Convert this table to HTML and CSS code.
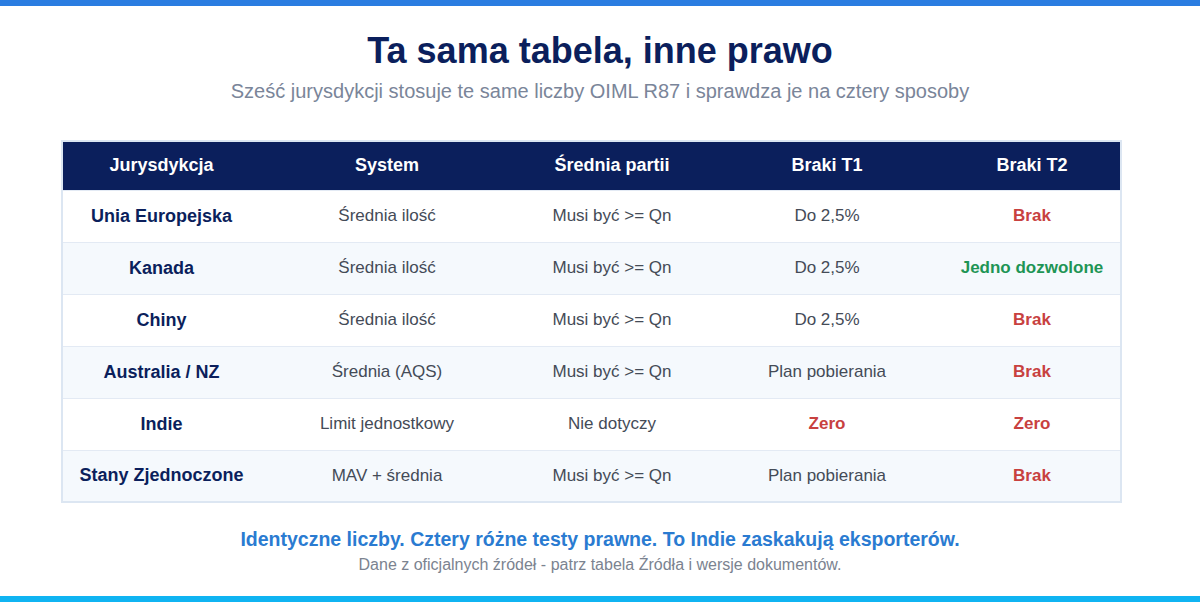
FILE: index.html
```html
<!DOCTYPE html>
<html lang="pl">
<head>
    <meta charset="utf-8">
    <title>Ta sama tabela, inne prawo</title>
    <link rel="stylesheet" href="styles.css">
</head>
<body>
    <div class="bar-top"></div>
    <main class="page">
        <header class="intro">
            <h1 class="title">Ta sama tabela, inne prawo</h1>
            <p class="subtitle">Sześć jurysdykcji stosuje te same liczby OIML R87 i sprawdza je na cztery sposoby</p>
        </header>

        <table class="rules">
            <colgroup>
                <col class="c1"><col class="c2"><col class="c3"><col class="c4"><col class="c5">
            </colgroup>
            <thead>
                <tr>
                    <th>Jurysdykcja</th>
                    <th>System</th>
                    <th>Średnia partii</th>
                    <th>Braki T1</th>
                    <th>Braki T2</th>
                </tr>
            </thead>
            <tbody>
                <tr>
                    <td class="name">Unia Europejska</td>
                    <td>Średnia ilość</td>
                    <td>Musi być &gt;= Qn</td>
                    <td>Do 2,5%</td>
                    <td class="bad">Brak</td>
                </tr>
                <tr>
                    <td class="name">Kanada</td>
                    <td>Średnia ilość</td>
                    <td>Musi być &gt;= Qn</td>
                    <td>Do 2,5%</td>
                    <td class="ok">Jedno dozwolone</td>
                </tr>
                <tr>
                    <td class="name">Chiny</td>
                    <td>Średnia ilość</td>
                    <td>Musi być &gt;= Qn</td>
                    <td>Do 2,5%</td>
                    <td class="bad">Brak</td>
                </tr>
                <tr>
                    <td class="name">Australia / NZ</td>
                    <td>Średnia (AQS)</td>
                    <td>Musi być &gt;= Qn</td>
                    <td>Plan pobierania</td>
                    <td class="bad">Brak</td>
                </tr>
                <tr>
                    <td class="name">Indie</td>
                    <td>Limit jednostkowy</td>
                    <td>Nie dotyczy</td>
                    <td class="bad">Zero</td>
                    <td class="bad">Zero</td>
                </tr>
                <tr>
                    <td class="name">Stany Zjednoczone</td>
                    <td>MAV + średnia</td>
                    <td>Musi być &gt;= Qn</td>
                    <td>Plan pobierania</td>
                    <td class="bad">Brak</td>
                </tr>
            </tbody>
        </table>

        <footer class="outro">
            <p class="takeaway">Identyczne liczby. Cztery różne testy prawne. To Indie zaskakują eksporterów.</p>
            <p class="source">Dane z oficjalnych źródeł - patrz tabela Źródła i wersje dokumentów.</p>
        </footer>
    </main>
    <div class="bar-bottom"></div>
</body>
</html>
```

FILE: styles.css
```css
* {
    box-sizing: border-box;
}

html, body {
    margin: 0;
    padding: 0;
}

body {
    width: 1200px;
    height: 602px;
    background: #ffffff;
    font-family: "Liberation Sans", Arial, sans-serif;
    display: flex;
    flex-direction: column;
}

.bar-top {
    height: 6px;
    background: #2a7de1;
}

.bar-bottom {
    height: 6px;
    background: #10b4f2;
}

.page {
    flex: 1;
    display: flex;
    flex-direction: column;
    align-items: center;
}

.intro {
    text-align: center;
    padding-top: 25px;
}

.title {
    margin: 0;
    font-size: 36px;
    font-weight: bold;
    color: #0b1f5c;
    line-height: 40px;
}

.subtitle {
    margin: 8px 0 0;
    font-size: 20px;
    color: #7a8599;
    line-height: 24px;
}

.rules {
    align-self: flex-start;
    margin: 37px 0 0 61px;
    width: 1059px;
    border-collapse: collapse;
    border: 2px solid #dce6f2;
    table-layout: fixed;
}

.c1 { width: 198px; }
.c2 { width: 254px; }
.c3 { width: 196px; }
.c4 { width: 234px; }
.c5 { width: 177px; }

.rules th {
    background: #0b1f5c;
    color: #ffffff;
    font-size: 18px;
    font-weight: bold;
    height: 49px;
    text-align: center;
    padding: 0;
}

.rules td {
    height: 52px;
    text-align: center;
    font-size: 17px;
    color: #444b57;
    border-top: 1px solid #e3eaf4;
    padding: 0;
}

.rules tbody tr:nth-child(even) td {
    background: #f5f9fd;
}

.rules td.name {
    font-weight: bold;
    font-size: 18px;
    color: #0b1f5c;
}

.rules td.bad {
    font-weight: bold;
    color: #c8413f;
}

.rules td.ok {
    font-weight: bold;
    color: #1e9555;
}

.outro {
    text-align: center;
    margin-top: 25px;
}

.takeaway {
    margin: 0;
    font-size: 19.5px;
    font-weight: bold;
    color: #2a7bd1;
    line-height: 23px;
}

.source {
    margin: 4px 0 0;
    font-size: 16px;
    color: #7b8390;
    line-height: 19px;
}
```
